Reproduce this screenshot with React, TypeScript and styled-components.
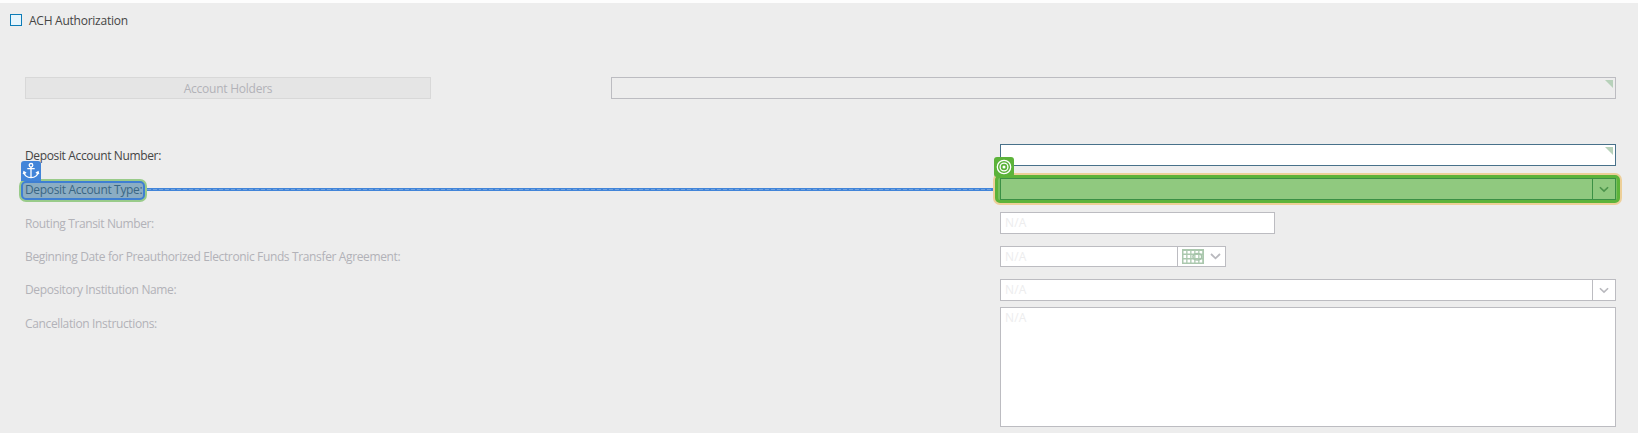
import React from 'react';
import styled, { createGlobalStyle, css } from 'styled-components';

const GlobalStyle = createGlobalStyle`
  * { box-sizing: border-box; }
  body { margin: 0; background: #ededed; overflow: hidden; }
`;

type Tone = 'normal' | 'muted' | 'linked';
const textColor = { normal: '#454545', muted: '#b2b2b8', linked: '#3a6683' };
const borderColor = { normal: '#48718a', muted: '#bcbcc1', linked: '#3c9045' };

const Page = styled.main`
  height: 433px;
  padding-top: 11px;
  border-top: 3px solid #fdfdfd;
  background: #ededed;
  font: 12px/16px 'Open Sans', 'Noto Sans', sans-serif;
  color: #454545;
`;

const CheckRow = styled.label`
  display: flex;
  align-items: flex-start;
  height: 12px;
  padding-left: 10px;
  gap: 7px;
`;

const Check = styled.span`
  width: 12px;
  height: 12px;
  border: 1px solid #0c7cb8;
  background: #e6f5fd;
`;

const Text = styled.span<{ $tone?: Tone; $spacing?: number }>`
  color: ${p => textColor[p.$tone ?? 'normal']};
  letter-spacing: ${p => p.$spacing ?? -0.36}px;
  white-space: nowrap;
`;

const Caption = styled.span`
  margin-top: -1px;
`;

const HolderRow = styled.div`
  display: grid;
  grid-template-columns: 406px 1005px;
  column-gap: 180px;
  margin: 51px 0 0 25px;
`;

const HolderButton = styled.button`
  height: 22px;
  padding: 2px 0 0;
  border: 1px solid #d8d8d8;
  background: #e5e5e5;
  font: inherit;
  line-height: 16px;
`;

const Form = styled.div`
  margin: 45px 0 0 25px;
`;

const Row = styled.div<{ $gap?: number; $height?: number }>`
  position: relative;
  display: grid;
  grid-template-columns: 975px 616px;
  align-items: start;
  height: ${p => p.$height ?? 22}px;
  margin-bottom: ${p => p.$gap ?? 12}px;
`;

const Label = styled.div<{ $drop?: number }>`
  padding-top: ${p => p.$drop ?? 4}px;
`;

const Field = styled.div<{ $tone?: Tone; $width?: number; $height?: number; $clear?: boolean }>`
  position: relative;
  display: flex;
  justify-content: space-between;
  width: ${p => p.$width ?? 616}px;
  height: ${p => p.$height ?? 22}px;
  border: 1px solid ${p => borderColor[p.$tone ?? 'muted']};
  background: ${p => (p.$clear ? '#ededed' : p.$tone === 'linked' ? '#90c97f' : '#fff')};
`;

const Placeholder = styled.span`
  padding: 2px 0 0 4px;
  color: #ededee;
  letter-spacing: 0.2px;
`;

const Trigger = styled.span<{ $width: number; $tone?: Tone }>`
  display: flex;
  align-items: center;
  justify-content: center;
  gap: 6px;
  margin-left: auto;
  width: ${p => p.$width}px;
  border-left: 1px solid ${p => borderColor[p.$tone ?? 'muted']};
`;

const Corner = styled.svg`
  position: absolute;
  top: 2px;
  right: 2px;
`;

const outline = css`
  position: absolute;
  pointer-events: none;
`;

const SourceHighlight = styled.div`
  ${outline}
  left: -4px;
  top: 3px;
  width: 124px;
  height: 19px;
  border: 2px solid #3f7fd2;
  border-radius: 5px;
  background: #8badc3;
  box-shadow: 0 0 0 2px #99cb8a;
`;

const TargetHighlight = styled.div`
  ${outline}
  left: 970px;
  top: -3px;
  width: 625px;
  height: 28px;
  border: 3px solid #5cb33a;
  border-radius: 5px;
  background: #78bf5e;
  box-shadow: 0 0 0 2px #edcf98;
`;

const Connector = styled.div`
  ${outline}
  left: 122px;
  top: 10px;
  width: 847px;
  height: 3px;
  background: repeating-linear-gradient(90deg, #6fa1df 0 4px, #3f82d8 4px 6px) 0 1px / 100% 1px no-repeat #4285d9;
`;

const Badge = styled.div<{ $x: number; $y: number; $color: string; $square?: boolean }>`
  ${outline}
  display: grid;
  place-items: center;
  left: ${p => p.$x}px;
  top: ${p => p.$y}px;
  width: 20px;
  height: 20px;
  border-radius: ${p => (p.$square ? '3px 3px 0 0' : '3px')};
  background: ${p => p.$color};
`;

const Raised = styled.div`
  position: relative;
`;

const Chevron = ({ color = '#b9b9be', size = 11 }: { color?: string; size?: number }) => (
  <svg width={size} height="7" viewBox="0 0 11 7">
    <path d="M1 1L5.5 5.3L10 1" fill="none" stroke={color} strokeWidth="1.8" />
  </svg>
);

const CornerMark = () => (
  <Corner width="8" height="8" viewBox="0 0 8 8">
    <path d="M0 0H8V8Z" fill="#b7d1ba" />
  </Corner>
);

const AnchorIcon = () => (
  <svg width="18" height="18" viewBox="0 0 18 18" fill="none" stroke="#fff" strokeWidth="1.3">
    <circle cx="9" cy="3.3" r="1.8" />
    <path d="M9 5.1V15.5M5.3 6.7H12.7M1.8 10C2.5 13.7 5.6 15.6 9 15.6S15.5 13.7 16.2 10M1.3 12.2L1.9 9.8L4.1 11.1M16.7 12.2L16.1 9.8L13.9 11.1" />
  </svg>
);

const TargetIcon = () => (
  <svg width="16" height="16" viewBox="0 0 16 16" fill="none" stroke="#fff">
    <circle cx="8" cy="8" r="6.7" strokeWidth="1.3" />
    <circle cx="8" cy="8" r="3.9" strokeWidth="1.3" />
    <circle cx="8" cy="8" r="1.5" fill="#fff" stroke="none" />
  </svg>
);

const CalendarIcon = () => (
  <svg width="22" height="15" viewBox="0 0 22 15">
    <rect width="22" height="15" fill="#abc8ae" />
    <path
      d="M1.5 2h2.7v2.6H1.5zM5.5 2h2.7v2.6H5.5zM9.5 2h2.7v2.6H9.5zM13.5 2h2.7v2.6h-2.7zM17.5 2h2.7v2.6h-2.7zM1.5 6h2.7v3H1.5zM5.5 6h2.7v3H5.5zM9.5 6h2.7v3H9.5zM13.5 6h2.7v3h-2.7zM17.5 6h2.7v3h-2.7zM1.5 10.5h2.7v3H1.5zM5.5 10.5h2.7v3H5.5zM9.5 10.5h2.7v3H9.5zM13.5 10.5h2.7v3h-2.7zM17.5 10.5h2.7v3h-2.7z"
      fill="#fff"
    />
    <ellipse cx="15.3" cy="7.7" rx="4.4" ry="3.3" fill="none" stroke="#a6c4aa" strokeWidth="1.5" />
  </svg>
);

export default function App() {
  return (
    <>
      <GlobalStyle />
      <Page>
        <CheckRow>
          <Check />
          <Caption><Text $spacing={-0.25}>ACH Authorization</Text></Caption>
        </CheckRow>

        <HolderRow>
          <HolderButton disabled>
            <Text $tone="muted" $spacing={-0.24}>Account Holders</Text>
          </HolderButton>
          <Field $clear $width={1005}>
            <CornerMark />
          </Field>
        </HolderRow>

        <Form>
          <Row>
            <Label><Text>Deposit Account Number:</Text></Label>
            <Field $tone="normal"><CornerMark /></Field>
          </Row>
          <Row>
            <Connector />
            <SourceHighlight />
            <TargetHighlight />
            <Raised>
              <Label><Text $tone="linked" $spacing={-0.34}>Deposit Account Type:</Text></Label>
            </Raised>
            <Field $tone="linked">
              <Trigger $width={23} $tone="linked"><Chevron color="#4d944c" size={10} /></Trigger>
            </Field>
            <Badge $x={-4} $y={-17} $color="#4285d9" $square><AnchorIcon /></Badge>
            <Badge $x={969} $y={-21} $color="#5cb33a"><TargetIcon /></Badge>
          </Row>
          <Row>
            <Label><Text $tone="muted" $spacing={-0.38}>Routing Transit Number:</Text></Label>
            <Field $width={275}><Placeholder>N/A</Placeholder></Field>
          </Row>
          <Row $height={21}>
            <Label $drop={3}>
              <Text $tone="muted">
                Beginning Date for Preauthorized Electronic Funds Transfer Agreement:
              </Text>
            </Label>
            <Field $width={226} $height={21}>
              <Placeholder>N/A</Placeholder>
              <Trigger $width={48}><CalendarIcon /><Chevron /></Trigger>
            </Field>
          </Row>
          <Row $gap={6}>
            <Label $drop={3}><Text $tone="muted">Depository Institution Name:</Text></Label>
            <Field>
              <Placeholder>N/A</Placeholder>
              <Trigger $width={23}><Chevron size={10} /></Trigger>
            </Field>
          </Row>
          <Row $gap={0} $height={120}>
            <Label $drop={9}><Text $tone="muted">Cancellation Instructions:</Text></Label>
            <Field $height={120}><Placeholder>N/A</Placeholder></Field>
          </Row>
        </Form>
      </Page>
    </>
  );
}
